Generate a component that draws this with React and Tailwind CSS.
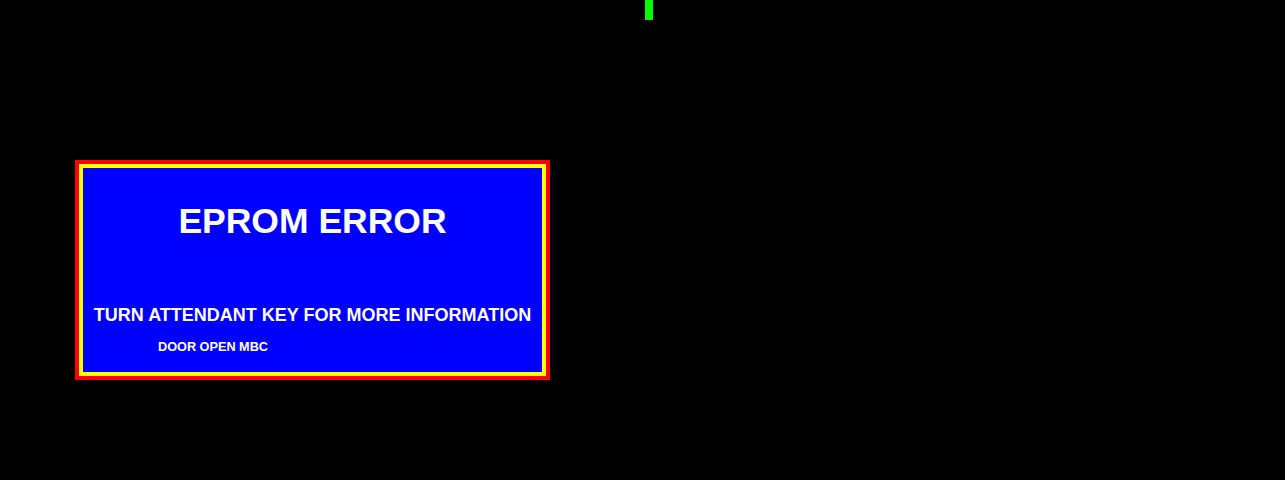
import React from 'react';

const App = () => {
  return (
    <div className="w-[1285px] h-[480px] bg-black flex flex-col overflow-hidden" style={{ fontFamily: '"Liberation Sans", Arial, sans-serif' }}>
      {/* status indicator */}
      <div className="ml-[645px] w-[8px] h-[20px] bg-[#00ff00]" />

      {/* error panel */}
      <div className="mt-[140px] ml-[75px] w-[475px] h-[220px] border-4 border-[#ff0000]">
        <div className="h-full border-4 border-[#ffff00] bg-[#0000ff] flex flex-col text-white font-bold">
          <h1 className="mt-[36px] text-center text-[35.5px] leading-none">EPROM ERROR</h1>
          <p className="mt-[66px] text-center text-[18px] leading-none">TURN ATTENDANT KEY FOR MORE INFORMATION</p>
          <p className="mt-[17.5px] ml-[75px] text-[12.7px] leading-none">DOOR OPEN MBC</p>
        </div>
      </div>
    </div>
  );
};

export default App;
